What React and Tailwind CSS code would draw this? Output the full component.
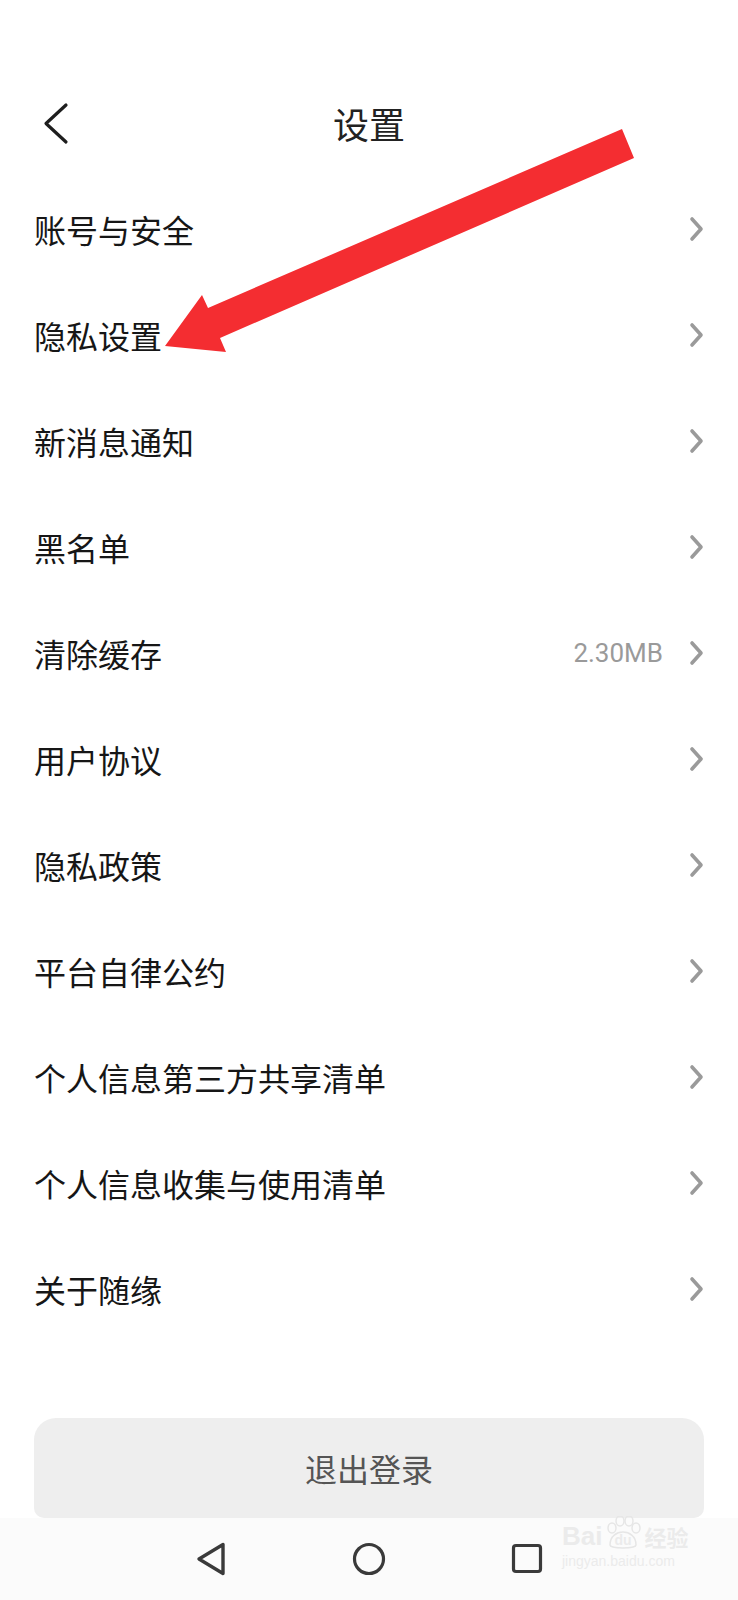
import React from 'react';

// 设置页面
const items = [
  { label: '账号与安全' },
  { label: '隐私设置' },
  { label: '新消息通知' },
  { label: '黑名单' },
  { label: '清除缓存', value: '2.30MB' },
  { label: '用户协议' },
  { label: '隐私政策' },
  { label: '平台自律公约' },
  { label: '个人信息第三方共享清单' },
  { label: '个人信息收集与使用清单' },
  { label: '关于随缘' },
];

const cjk = { fontFamily: '"Noto Sans CJK SC", "Noto Sans", sans-serif' };

const Chevron = () => (
  <svg width="16" height="26" viewBox="0 0 16 26" fill="none">
    <path d="M3 3 L12 13 L3 23" stroke="#9a9a9a" strokeWidth="3.6" strokeLinecap="round" strokeLinejoin="round" />
  </svg>
);

const Row = ({ label, value }) => (
  <div className="h-[106px] flex items-center pl-[34px] pr-[33px]">
    <span className="flex-1 text-[32px] leading-[40px] text-[#161616]">{label}</span>
    {value && (
      <span className="mr-[26px] text-[26px] text-[#9a9a9a]" style={{ fontFamily: 'Roboto, sans-serif' }}>
        {value}
      </span>
    )}
    <Chevron />
  </div>
);

export default function App() {
  return (
    <div className="relative w-[738px] h-[1600px] bg-white overflow-hidden" style={cjk}>
      {/* 顶部标题栏 */}
      <div className="h-[176px] relative flex justify-center pt-[101px]">
        <button className="absolute left-[40px] top-[100px]">
          <svg width="30" height="48" viewBox="0 0 30 48" fill="none">
            <path d="M26 5 L6 23.5 L26 42" stroke="#1e1e1e" strokeWidth="3.2" strokeLinecap="round" strokeLinejoin="round" />
          </svg>
        </button>
        <h1 className="text-[36px] leading-[44px] text-[#222]">设置</h1>
      </div>

      {/* 菜单列表 */}
      <div>
        {items.map((it) => (
          <Row key={it.label} {...it} />
        ))}
      </div>

      {/* 退出登录 */}
      <div className="px-[34px] mt-[76px]">
        <button className="w-full h-[100px] bg-[#eeeeee] rounded-t-[22px] rounded-b-[10px] text-[32px] text-[#555]">
          退出登录
        </button>
      </div>

      {/* 系统导航栏 */}
      <div className="h-[82px] bg-[#fbfbfb] flex items-center justify-center gap-[118px]">
        <svg width="40" height="40" viewBox="0 0 40 40" fill="none">
          <path d="M32 5.5 L32 34.5 L8 20 Z" stroke="#3a3a3a" strokeWidth="3.4" strokeLinejoin="round" />
        </svg>
        <svg width="40" height="40" viewBox="0 0 40 40" fill="none">
          <circle cx="20" cy="20" r="14.5" stroke="#3a3a3a" strokeWidth="3.2" />
        </svg>
        <svg width="40" height="40" viewBox="0 0 40 40" fill="none">
          <rect x="6.5" y="6.5" width="27" height="26" rx="2.5" stroke="#3a3a3a" strokeWidth="3.2" />
        </svg>
      </div>

      {/* 红色箭头标注 */}
      <svg className="absolute left-0 top-0 pointer-events-none" width="738" height="400" viewBox="0 0 738 400">
        <polygon
          points="622,129 634,158 220,338 226,352 165,346 202,295 208,308"
          fill="#f42d31"
        />
      </svg>

      {/* 百度经验水印 */}
      <div className="absolute left-[562px] top-[1516px] flex flex-col items-start text-[#ebebeb] pointer-events-none">
        <div className="flex items-end gap-[2px]">
          <span className="text-[26px] leading-[28px] font-bold" style={{ fontFamily: '"Liberation Sans", sans-serif' }}>Bai</span>
          <div className="relative w-[38px] h-[34px]">
            <svg className="absolute inset-0" width="38" height="34" viewBox="0 0 38 34" fill="none" stroke="#e6e6e6" strokeWidth="1.5">
              <ellipse cx="8" cy="12" rx="4" ry="5" />
              <ellipse cx="16" cy="5" rx="4" ry="5" />
              <ellipse cx="25" cy="5" rx="4" ry="5" />
              <ellipse cx="32" cy="12" rx="4" ry="5" />
              <path d="M6 29 C6 20 13 16 19 16 C25 16 32 20 32 29 C32 33 6 33 6 29 Z" />
            </svg>
            <span className="absolute left-[10px] top-[17px] text-[14px] leading-[14px] font-bold" style={{ fontFamily: '"Liberation Sans", sans-serif' }}>du</span>
          </div>
          <span className="text-[22px] leading-[28px] font-bold">经验</span>
        </div>
        <span className="text-[14px] leading-[18px] mt-[2px]" style={{ fontFamily: '"Liberation Sans", sans-serif' }}>jingyan.baidu.com</span>
      </div>
    </div>
  );
}
